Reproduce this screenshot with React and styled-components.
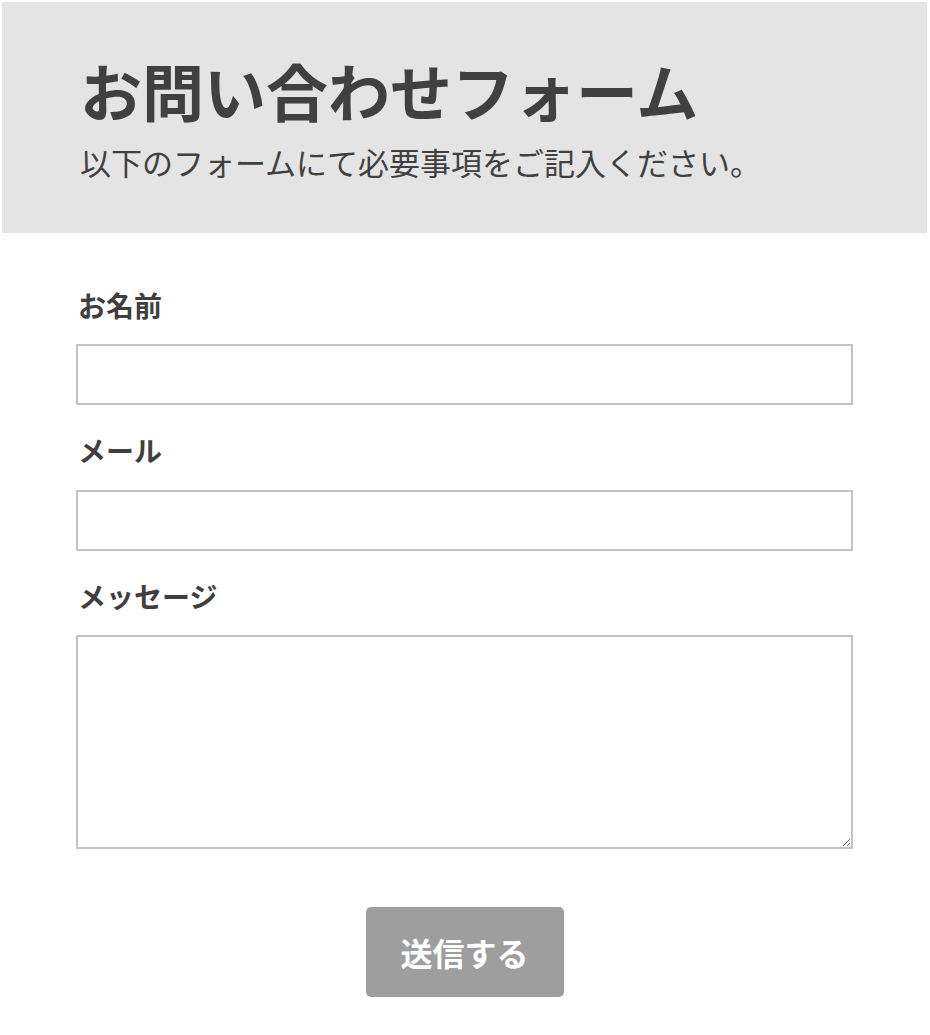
import styled, { createGlobalStyle } from "styled-components";

const GlobalStyle = createGlobalStyle`
  body {
    margin: 0;
    background: #ffffff;
    font-family: "Noto Sans CJK JP", "Noto Sans", sans-serif;
    color: #3f3f3f;
  }
  * {
    box-sizing: border-box;
  }
`;

const Page = styled.div`
  width: 925px;
  margin: 2px 0 0 2px;
`;

const Header = styled.header`
  height: 231px;
  background: #e4e4e4;
  padding: 45px 78px 0;
`;

const Title = styled.h1`
  margin: 0;
  font-size: 62px;
  font-weight: 700;
  line-height: 1.4;
  color: #404040;
`;

const Lead = styled.p`
  margin: 6px 0 0;
  font-size: 31px;
  font-weight: 400;
  line-height: 1.4;
  color: #404040;
`;

const Form = styled.form`
  padding: 54px 74px 40px;
  display: flex;
  flex-direction: column;
`;

const Field = styled.div`
  display: flex;
  flex-direction: column;
  margin-bottom: 27px;
`;

const Label = styled.label`
  font-size: 28px;
  font-weight: 700;
  line-height: 1.3;
  margin: 0 0 21px 2px;
  color: #3f3f3f;
`;

const Input = styled.input`
  width: 100%;
  height: 61px;
  border: 2px solid #c3c3c3;
  background: #fff;
  font-size: 22px;
  padding: 0 12px;
  font-family: inherit;
  outline: none;
`;

const TextArea = styled.textarea`
  width: 100%;
  height: 214px;
  border: 2px solid #c3c3c3;
  background: #fff;
  font-size: 22px;
  padding: 12px;
  font-family: inherit;
  outline: none;
  resize: vertical;
  display: block;
`;

const Actions = styled.div`
  display: flex;
  justify-content: center;
  margin-top: 31px;
`;

const Submit = styled.button`
  width: 198px;
  height: 90px;
  border: none;
  border-radius: 5px;
  background: #9e9e9e;
  color: #ffffff;
  font-family: inherit;
  font-size: 32px;
  font-weight: 700;
  cursor: pointer;
`;

export default function App() {
  return (
    <>
      <GlobalStyle />
      <Page>
        <Header>
          <Title>お問い合わせフォーム</Title>
          <Lead>以下のフォームにて必要事項をご記入ください。</Lead>
        </Header>
        <Form onSubmit={(e) => e.preventDefault()}>
          <Field>
            <Label htmlFor="name">お名前</Label>
            <Input id="name" type="text" />
          </Field>
          <Field>
            <Label htmlFor="mail">メール</Label>
            <Input id="mail" type="email" />
          </Field>
          <Field>
            <Label htmlFor="msg">メッセージ</Label>
            <TextArea id="msg" />
          </Field>
          <Actions>
            <Submit type="submit">送信する</Submit>
          </Actions>
        </Form>
      </Page>
    </>
  );
}
